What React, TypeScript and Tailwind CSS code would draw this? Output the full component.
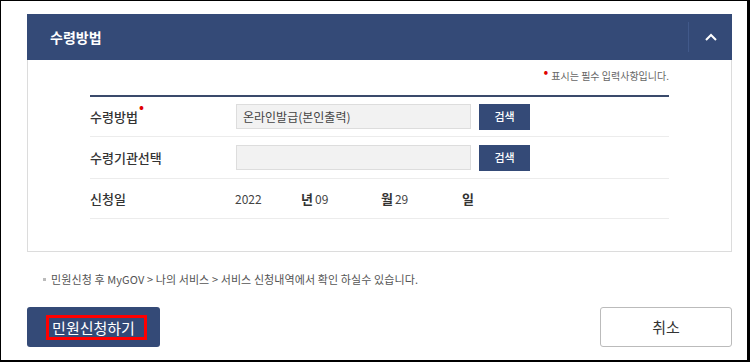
export default function App() {
  return (
    <div className="w-[750px] h-[362px] box-border border-l border-t border-r-[3px] border-b-2 border-black bg-white pl-[26px] pr-[15px] pt-[13px] font-['Noto_Sans_CJK_KR','Noto_Sans',sans-serif] text-[#333]">
      {/* panel */}
      <div className="border-x border-b border-[#dcdcdc]">
        <div className="h-[46px] bg-[#344a77] flex items-center -mx-px">
          <h3 className="pl-[23px] text-[14px] font-bold text-white flex-1">수령방법</h3>
          <div className="h-[30px] w-px bg-[#41598a]" />
          <button className="w-[43px] h-full flex items-center justify-center">
            <svg width="12" height="8" viewBox="0 0 12 8">
              <polyline points="1,7 6,2 11,7" fill="none" stroke="white" strokeWidth="2" />
            </svg>
          </button>
        </div>
        <div className="pl-[62px] pr-[62px] pt-[8px] pb-[32px]">
          <p className="text-right text-[10px] text-[#666] leading-[16px] mb-[11px]">
            <span className="text-[#e00000] text-[14px] leading-[0] relative -top-[3px] mr-[3px]">•</span>
            표시는 필수 입력사항입니다.
          </p>
          <div className="border-t-2 border-[#3a4a6b]">
            <div className="h-[40px] border-b border-[#ececec] flex items-center">
              <div className="w-[146px] text-[13px] font-medium relative">
                수령방법
                <span className="absolute left-[49px] -top-[8px] text-[#e00000] text-[14px] leading-none">•</span>
              </div>
              <div className="w-[235px] h-[25px] bg-[#f2f2f2] border border-[#ddd] text-[12px] text-[#444] flex items-center px-[6px]">온라인발급(본인출력)</div>
              <button className="ml-[8px] w-[51px] h-[26px] bg-[#344a77] text-white text-[11px] font-medium">검색</button>
            </div>
            <div className="h-[42px] border-b border-[#ececec] flex items-center">
              <div className="w-[146px] text-[13px] font-medium">수령기관선택</div>
              <div className="w-[235px] h-[25px] bg-[#f2f2f2] border border-[#ddd]" />
              <button className="ml-[8px] w-[51px] h-[26px] bg-[#344a77] text-white text-[11px] font-medium">검색</button>
            </div>
            <div className="h-[40px] border-b border-[#ececec] flex items-center text-[12px]">
              <div className="w-[145px] text-[13px] font-medium">신청일</div>
              <span className="w-[66px] text-[#444]">2022</span>
              <span className="font-bold text-[13px] mr-[2px]">년</span>
              <span className="w-[66px] text-[#444]">09</span>
              <span className="font-bold text-[13px] mr-[2px]">월</span>
              <span className="w-[67px] text-[#444]">29</span>
              <span className="font-bold text-[13px]">일</span>
            </div>
          </div>
        </div>
      </div>
      {/* note */}
      <p className="mt-[19px] pl-[16px] text-[11px] tracking-[0.1px] text-[#555] leading-[16px] flex items-center">
        <span className="inline-block w-[3px] h-[3px] bg-[#bbb] mr-[5px]" />
        민원신청 후 MyGOV &gt; 나의 서비스 &gt; 서비스 신청내역에서 확인 하실수 있습니다.
      </p>
      {/* buttons */}
      <div className="mt-[20px] flex justify-between">
        <button className="w-[133px] h-[40px] bg-[#344a77] rounded-[3px] flex items-center justify-center">
          <span className="ml-[6px] border-[3px] border-[#ff0000] pl-[3px] pr-[9px] text-white text-[15px] leading-[19px]">민원신청하기</span>
        </button>
        <button className="w-[132px] h-[40px] bg-white border border-[#bbb] rounded-[3px] text-[15px] text-[#333]">취소</button>
      </div>
    </div>
  );
}
